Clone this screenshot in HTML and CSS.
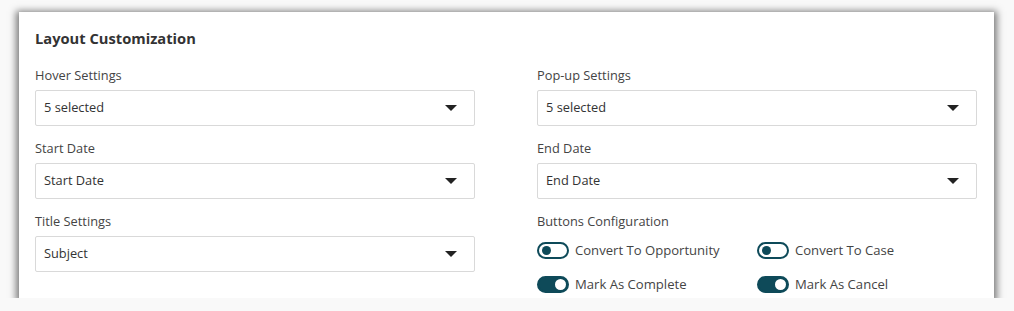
FILE: index.html
```html
<!DOCTYPE html>
<html lang="en">
<head>
    <meta charset="UTF-8">
    <title>Layout Customization</title>
    <link rel="stylesheet" href="styles.css">
</head>
<body>
    <div class="card">
        <h2>Layout Customization</h2>
        <div class="grid">
            <div class="field">
                <label>Hover Settings</label>
                <div class="select">5 selected<span class="caret"></span></div>
            </div>
            <div class="field">
                <label>Pop-up Settings</label>
                <div class="select">5 selected<span class="caret"></span></div>
            </div>
            <div class="field">
                <label>Start Date</label>
                <div class="select">Start Date<span class="caret"></span></div>
            </div>
            <div class="field">
                <label>End Date</label>
                <div class="select">End Date<span class="caret"></span></div>
            </div>
            <div class="field">
                <label>Title Settings</label>
                <div class="select">Subject<span class="caret"></span></div>
            </div>
            <div class="field">
                <label>Buttons Configuration</label>
                <div class="toggles">
                    <div class="toggle-item"><span class="toggle"></span>Convert To Opportunity</div>
                    <div class="toggle-item"><span class="toggle"></span>Convert To Case</div>
                    <div class="toggle-item"><span class="toggle on"></span>Mark As Complete</div>
                    <div class="toggle-item"><span class="toggle on"></span>Mark As Cancel</div>
                </div>
            </div>
        </div>
    </div>
</body>
</html>
```

FILE: styles.css
```css
body {
    font-family: "Open Sans", Arial, sans-serif;
    background-color: #f9f9f9;
    color: #333;
    margin: 0;
    padding: 12px 0 0 19px;
}
.card {
    width: 975px;
    height: 286px;
    box-sizing: border-box;
    background-color: #fff;
    padding: 16px 17px 0 16px;
    box-shadow: 0 2px 7px 3px rgba(0, 0, 0, 0.5);
    overflow: hidden;
}
h2 {
    margin: 0;
    font-size: 14.7px;
    line-height: 20px;
    font-weight: 700;
    color: #333;
}
.grid {
    display: grid;
    grid-template-columns: 440px 440px;
    column-gap: 62px;
    row-gap: 13px;
    margin-top: 18px;
}
.field {
    display: flex;
    flex-direction: column;
}
label {
    font-size: 12.8px;
    line-height: 18px;
    color: #444;
    margin-bottom: 6px;
}
.select {
    position: relative;
    height: 36px;
    box-sizing: border-box;
    border: 1px solid #d9d9d9;
    border-radius: 2px;
    padding: 0 8px;
    font-size: 12.8px;
    line-height: 33px;
    color: #333;
}
.caret {
    position: absolute;
    right: 17px;
    top: 14px;
    width: 0;
    height: 0;
    border-left: 6px solid transparent;
    border-right: 6px solid transparent;
    border-top: 6px solid #222;
}
.toggles {
    display: grid;
    grid-template-columns: 220px 220px;
    row-gap: 17px;
    margin-top: 6px;
}
.toggle-item {
    display: flex;
    align-items: center;
    gap: 6px;
    font-size: 13.1px;
    line-height: 17px;
    color: #444;
}
.toggle {
    position: relative;
    width: 32px;
    height: 17px;
    box-sizing: border-box;
    border: 2px solid #0e4a59;
    border-radius: 9px;
    background-color: #fff;
}
.toggle::after {
    content: "";
    position: absolute;
    left: 3px;
    top: 2px;
    width: 9px;
    height: 9px;
    border-radius: 50%;
    background-color: #0e4a59;
}
.toggle.on {
    background-color: #0e4a59;
}
.toggle.on::after {
    left: auto;
    right: 1px;
    top: 1px;
    width: 11px;
    height: 11px;
    background-color: #fff;
}
```
